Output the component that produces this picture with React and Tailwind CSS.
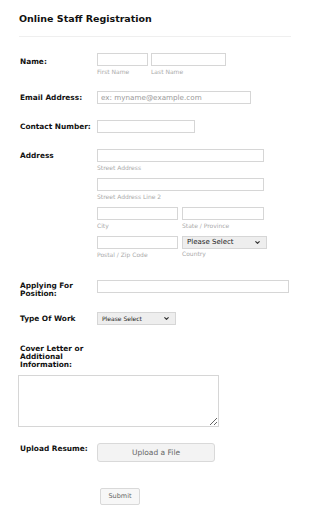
import { ChevronDown } from "lucide-react";

const font = { fontFamily: '"DejaVu Sans", Verdana, sans-serif' };

function Label({ children, className = "" }) {
  return (
    <div className={`w-[77px] shrink-0 text-[7.4px] font-bold leading-[8px] text-[#111] ${className}`}>
      {children}
    </div>
  );
}

function Input({ className = "", placeholder }) {
  return (
    <input
      placeholder={placeholder}
      className={`block h-[13px] border border-[#d6d6d6] bg-white px-[3px] text-[7.2px] outline-none placeholder:text-[#999] ${className}`}
    />
  );
}

function Sub({ children }) {
  return <div className="mt-[3px] text-[6px] leading-[6px] text-[#aaa]">{children}</div>;
}

function Select({ className = "", textClass = "" }) {
  return (
    <div
      className={`flex h-[13px] items-center justify-between border border-[#d6d6d6] bg-[#eee] pl-[4px] pr-[5px] ${className}`}
    >
      <span className={`text-[#222] ${textClass}`}>Please Select</span>
      <ChevronDown size={7} strokeWidth={4} className="text-[#333]" />
    </div>
  );
}

export default function App() {
  return (
    <div className="h-[517px] w-[310px] bg-white" style={font}>
      <div className="px-[19px] pt-[13px]">
        <h1 className="text-[9.5px] font-bold leading-[12px] text-[#111]">Online Staff Registration</h1>
        <div className="mt-[11px] h-px w-[272px] bg-[#efefef]" />
      </div>

      <div className="pl-[20px] pr-[20px]">
        {/* Name */}
        <div className="mt-[16px] flex">
          <Label className="pt-[5px]">Name:</Label>
          <div className="flex gap-[3px]">
            <div>
              <Input className="w-[51px]" />
              <Sub>First Name</Sub>
            </div>
            <div>
              <Input className="w-[75px]" />
              <Sub>Last Name</Sub>
            </div>
          </div>
        </div>

        {/* Email */}
        <div className="mt-[16px] flex items-center">
          <Label>Email Address:</Label>
          <Input className="w-[154px]" placeholder="ex: myname@example.com" />
        </div>

        {/* Contact */}
        <div className="mt-[16px] flex items-center">
          <Label>Contact Number:</Label>
          <Input className="w-[98px]" />
        </div>

        {/* Address */}
        <div className="mt-[16px] flex">
          <Label className="pt-[3px]">Address</Label>
          <div className="flex flex-col gap-[7px]">
            <div>
              <Input className="w-[167px]" />
              <Sub>Street Address</Sub>
            </div>
            <div>
              <Input className="w-[167px]" />
              <Sub>Street Address Line 2</Sub>
            </div>
            <div className="flex gap-[4px]">
              <div>
                <Input className="w-[81px]" />
                <Sub>City</Sub>
              </div>
              <div>
                <Input className="w-[82px]" />
                <Sub>State / Province</Sub>
              </div>
            </div>
            <div className="flex gap-[4px]">
              <div>
                <Input className="w-[81px]" />
                <Sub>Postal / Zip Code</Sub>
              </div>
              <div>
                <Select className="w-[85px] text-[7px]" />
                <div className="mt-[2px] text-[6px] leading-[6px] text-[#aaa]">Country</div>
              </div>
            </div>
          </div>
        </div>

        {/* Applying */}
        <div className="mt-[22px] flex">
          <Label className="pt-[2px]">
            Applying For
            <br />
            Position:
          </Label>
          <Input className="w-[192px]" />
        </div>

        {/* Type of work */}
        <div className="mt-[14px] flex items-center">
          <Label>Type Of Work</Label>
          <Select className="w-[79px] text-[6px]" />
        </div>

        {/* Cover letter */}
        <div className="mt-[20px]">
          <Label className="w-[90px]">
            Cover Letter or
            <br />
            Additional
            <br />
            Information:
          </Label>
          <textarea className="-ml-[2px] mt-[6px] block h-[52px] w-[201px] resize border border-[#d6d6d6] bg-white text-[7px] outline-none" />
        </div>

        {/* Upload */}
        <div className="mt-[16px] flex">
          <Label className="pt-[2px]">Upload Resume:</Label>
          <button className="h-[19px] w-[118px] rounded-[3px] border border-[#d9d9d9] bg-[#f3f3f3] text-[7.5px] text-[#666]">
            Upload a File
          </button>
        </div>

        {/* Submit */}
        <div className="mt-[19px] pl-[80px]">
          <button className="h-[17px] w-[40px] rounded-[2px] border border-[#d9d9d9] bg-[#f7f7f7] text-[6.5px] text-[#666]">
            Submit
          </button>
        </div>
      </div>
    </div>
  );
}
